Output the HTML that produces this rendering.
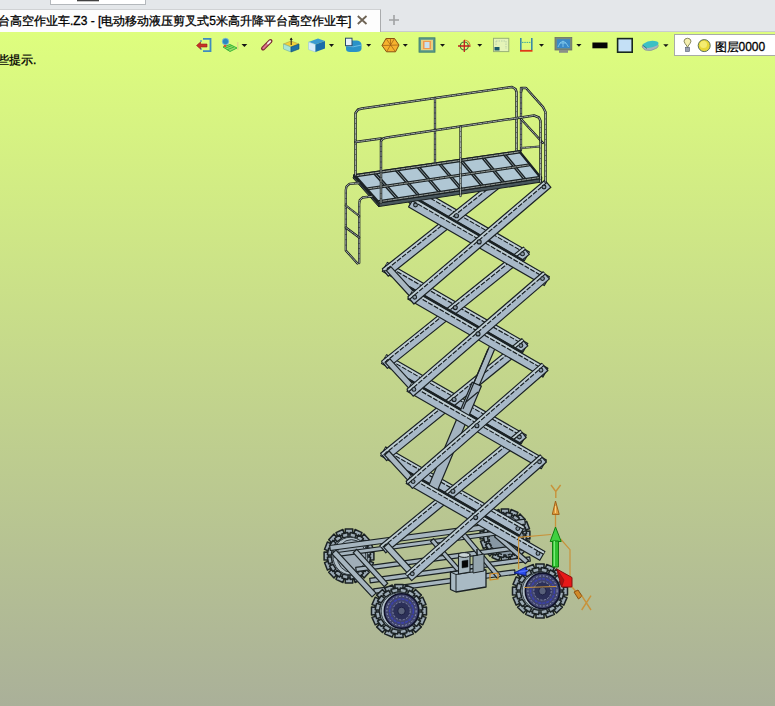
<!DOCTYPE html>
<html><head><meta charset="utf-8">
<style>
html,body{margin:0;padding:0;}
body{width:775px;height:706px;overflow:hidden;position:relative;font-family:"Liberation Sans",sans-serif;background:#e4e7ea;}
.abs{position:absolute;}
#topbar{left:0;top:0;width:775px;height:9px;background:#e4e7ea;}
#inp{left:50px;top:-2px;width:96px;height:7px;background:#fff;border:1px solid #b4b8bc;box-sizing:border-box;}
#tab{left:0;top:9px;width:381px;height:23px;background:#fdfdfd;border-right:1px solid #a9abad;border-top:1px solid #d0d2d4;box-sizing:border-box;}
#tabtxt{left:-2px;top:12px;font-size:12px;line-height:18px;color:#000;white-space:nowrap;-webkit-text-stroke:0.3px #000;}
#view{left:0;top:32px;width:775px;height:674px;background:linear-gradient(to bottom,#defe7e 0%,#aab099 100%);}
#line31{left:381px;top:31px;width:394px;height:1px;background:#c9cccf;}
#hint{left:-3px;top:52px;font-size:12px;line-height:16px;color:#000;white-space:nowrap;-webkit-text-stroke:0.3px #000;}
svg{position:absolute;left:0;top:0;}
</style></head>
<body>
<div id="topbar" class="abs"></div>
<div id="inp" class="abs"></div>
<div id="tab" class="abs"></div>
<div id="tabtxt" class="abs">台高空作业车.Z3 - [电动移动液压剪叉式5米高升降平台高空作业车]</div>
<div id="line31" class="abs"></div>
<div id="view" class="abs"></div>
<div id="hint" class="abs">些提示.</div>
<svg width="775" height="706" viewBox="0 0 775 706">
<!-- tab close and plus -->
<path d="M357.8,16 L366.5,24 M366.5,16 L357.8,24" stroke="#6e6354" stroke-width="1.8"/>
<path d="M389,20 L399,20 M394,15 L394,25" stroke="#a0a2a4" stroke-width="1.6"/>
<!-- icon1 exit -->
<path d="M203,38.8 L210.5,38.8 L210.5,51.2 L203,51.2" fill="none" stroke="#3e8cc0" stroke-width="1.8"/>
<path d="M201,40 L201,42 M201,48 L201,50" stroke="#3e8cc0" stroke-width="1.2"/>
<polygon points="196.5,45.5 200.5,42 200.5,44 207,44 207,47 200.5,47 200.5,49" fill="#c8302a" stroke="#902018" stroke-width="0.6"/>
<!-- icon2 blend -->
<path d="M223,47 L230,44.5 L237,48 L230,51.5 Z" fill="#9ad86a" stroke="#38b838" stroke-width="1"/>
<path d="M225,48.3 L232,45.5 M227,49.8 L234,47" stroke="#38b838" stroke-width="1"/>
<circle cx="225.5" cy="41.5" r="3.2" fill="#2a88c0" stroke="#7ab8e0" stroke-width="0.8"/>
<circle cx="225" cy="46" r="1.3" fill="#e05030"/>
<line x1="237.8" y1="42" x2="237.8" y2="50" stroke="#e0c090" stroke-width="0.8"/>
<polygon points="241.5,44 247.3,44 244.4,47" fill="#151515"/>
<!-- icon3 pen -->
<path d="M263,48.5 L270.5,41" stroke="#7a2a30" stroke-width="4" stroke-linecap="round"/>
<path d="M263.3,48.2 L267,44.5" stroke="#e07890" stroke-width="2" stroke-linecap="round"/>
<path d="M268,43.5 L270.2,41.3" stroke="#f6eee8" stroke-width="2" stroke-linecap="round"/>
<!-- icon4 extrude box -->
<polygon points="283.5,44 291,41 299,44 291,47" fill="#f2d23a" stroke="#b0a040" stroke-width="0.6"/>
<polygon points="283.5,44 291,47 291,52 283.5,49" fill="#a8e6d6" stroke="#70b0a0" stroke-width="0.6"/>
<polygon points="291,47 299,44 299,49 291,52" fill="#1c72a6" stroke="#104a70" stroke-width="0.6"/>
<line x1="291.2" y1="38" x2="291.2" y2="45" stroke="#202020" stroke-width="1"/>
<polygon points="289.7,40 291.2,37.5 292.7,40" fill="#202020"/>
<!-- icon5 cube -->
<polygon points="308.5,42 318,38.5 325,41 315.5,44.5" fill="#3a9ad0"/>
<polygon points="308.5,42 315.5,44.5 315.5,52 308.5,49.5" fill="#d8ecfa" stroke="#8ac0e0" stroke-width="0.5"/>
<polygon points="315.5,44.5 325,41 325,48.5 315.5,52" fill="#1a6ca8"/>
<polygon points="329,44 334,44 331.5,47" fill="#151515"/>
<!-- icon6 view box -->
<path d="M346,44 Q346,41 350,40.5 L357,40.5 Q361.5,41 361.5,45 L361.5,49 Q361,52 356,52 L350,52 Q346,52 346,49 Z" fill="#2a92c8"/>
<path d="M346,46 Q353,48 361.5,45" stroke="#7cc8ec" stroke-width="0.8" fill="none"/>
<rect x="345.5" y="38.2" width="6.5" height="7.5" fill="#e8f2fa" stroke="#2a4a6a" stroke-width="1"/>
<polygon points="366.2,44 371.2,44 368.7,46.8" fill="#151515"/>
<!-- icon7 hexagon -->
<polygon points="386,38.5 394.5,38.5 399,45 395.5,51.8 386.5,51.8 382,45.5" fill="#f6b22e" stroke="#8a5212" stroke-width="1"/>
<path d="M386,38.5 L395.5,51.8 M394.5,38.5 L386.5,51.8 M382,45.5 L399,45 M390.5,45 L390.5,38.5" stroke="#9a5a12" stroke-width="0.7"/>
<polygon points="402.8,44 407.8,44 405.3,46.8" fill="#151515"/>
<!-- icon8 frame -->
<rect x="419" y="37.8" width="16" height="14.4" fill="#5a9a8a" stroke="#3a7a70" stroke-width="0.8"/>
<rect x="421" y="39.8" width="12" height="10.4" fill="#e8d080"/>
<rect x="423" y="41" width="8" height="8" fill="#f09850"/>
<rect x="424.5" y="42" width="5" height="6" fill="#c8e0f0"/>
<polygon points="440,44 445,44 442.5,46.8" fill="#151515"/>
<!-- icon9 crosshair -->
<circle cx="464.3" cy="46" r="4" fill="none" stroke="#3a7a3a" stroke-width="1.2"/>
<path d="M464,40 A6,6 0 0 1 470,45" fill="none" stroke="#d08030" stroke-width="1.2"/>
<path d="M458,46 L470.5,46 M464.3,40 L464.3,52" stroke="#c02020" stroke-width="1.3"/>
<polygon points="477.3,44 482.2,44 479.7,46.8" fill="#151515"/>
<!-- icon10 dashed square -->
<rect x="493.5" y="38.3" width="15.3" height="13.3" fill="#e4f4b8" stroke="#98b078" stroke-width="1"/>
<path d="M496,41 L506,41 L506,49 M496,41 L496,45" fill="none" stroke="#a8c0a0" stroke-width="0.7" stroke-dasharray="1.5 1"/>
<rect x="494.5" y="47" width="5" height="3.5" fill="#1a5a6a"/>
<!-- icon11 dimension -->
<path d="M520.8,38 L520.8,50 M531.8,38 L531.8,50" stroke="#3a8aa8" stroke-width="1.6"/>
<path d="M522,42.4 L530.5,42.4" stroke="#3aa8a0" stroke-width="1" stroke-dasharray="1.5 0.8"/>
<path d="M520,50.8 L532.5,50.8" stroke="#e03818" stroke-width="1.8"/>
<polygon points="539,44 544,44 541.5,46.8" fill="#151515"/>
<!-- icon12 monitor -->
<rect x="555" y="37.5" width="16.8" height="12.5" fill="#7a8a7a" stroke="#6a7068" stroke-width="0.8"/>
<rect x="556.8" y="39.2" width="13.2" height="9" fill="#3a8ac8"/>
<path d="M558,47 L560,43 L563,41 L566,43 L568.5,47 M560,43 L566,43 M563,41 L563,47" stroke="#8ad0f0" stroke-width="0.8" fill="none"/>
<rect x="559" y="50" width="9" height="2.8" fill="#8a8f88"/>
<polygon points="576.3,44 581.5,44 578.9,46.8" fill="#151515"/>
<!-- icon13 black bar -->
<rect x="592.4" y="42.5" width="15.1" height="5.8" fill="#050505"/>
<!-- icon14 light blue square -->
<rect x="617.6" y="38.6" width="14.6" height="13.6" fill="#c4e0f6" stroke="#18281e" stroke-width="1.6"/>
<!-- icon15 layers -->
<path d="M642,46 Q648,41 656,43 Q660,45 657,48 Q651,52 645,50 Q642,48 642,46 Z" fill="#a8b4bc" stroke="#7a8a90" stroke-width="0.6"/>
<path d="M643,44 Q650,39 657,41.5 Q660,43 657,45.5 Q650,49 645,47.5 Q642.5,46 643,44 Z" fill="#3cc0c4"/>
<path d="M642.5,45 L647,48.5" stroke="#206a80" stroke-width="0.8"/>
<polygon points="663.2,44.3 668.5,44.3 665.9,47.1" fill="#151515"/>
<!-- combo -->
<rect x="674.5" y="34.5" width="105" height="21" fill="#ffffff" stroke="#a8aca8" stroke-width="1"/>
<path d="M687.5,48.5 Q687.5,46 685,43.5 Q683,41 685,39 Q687.5,37.5 690,39 Q692,41 690,43.5 Q687.5,46 687.5,48.5 Z" fill="#f6f0b0" stroke="#7a7a50" stroke-width="0.9"/>
<rect x="685.5" y="47.5" width="4" height="4" fill="#9aa0b0" stroke="#505a70" stroke-width="0.6"/>
<circle cx="704.2" cy="45.6" r="6" fill="#e8d838" stroke="#5a7058" stroke-width="1"/>
<circle cx="703.5" cy="44.5" r="3.5" fill="#f4ec70"/>
<text x="714.5" y="50.5" font-family="Liberation Sans, sans-serif" font-size="12" fill="#000" stroke="#000" stroke-width="0.3">图层0000</text>

<ellipse cx="505" cy="535" rx="22.1" ry="23" fill="#a3b2bc" stroke="#1b2224" stroke-width="1.6"/>
<polygon points="529.9,531.1 529.9,538.9 525.4,538.5 525.4,531.5" fill="#9cabb5" stroke="#1b2224" stroke-width="1.5" stroke-linejoin="round" />
<polygon points="529.5,541.3 526.6,548.6 522.5,546.4 525.1,539.9" fill="#9cabb5" stroke="#1b2224" stroke-width="1.5" stroke-linejoin="round" />
<polygon points="525.3,550.6 520,556.1 517,552.5 521.8,547.5" fill="#9cabb5" stroke="#1b2224" stroke-width="1.5" stroke-linejoin="round" />
<polygon points="518,557.5 511.1,560.5 509.7,555.9 515.9,553.2" fill="#9cabb5" stroke="#1b2224" stroke-width="1.5" stroke-linejoin="round" />
<polygon points="508.8,561 501.2,561 501.6,556.2 508.4,556.2" fill="#9cabb5" stroke="#1b2224" stroke-width="1.5" stroke-linejoin="round" />
<polygon points="498.9,560.5 492,557.5 494.1,553.2 500.3,555.9" fill="#9cabb5" stroke="#1b2224" stroke-width="1.5" stroke-linejoin="round" />
<polygon points="490,556.1 484.7,550.6 488.2,547.5 493,552.5" fill="#9cabb5" stroke="#1b2224" stroke-width="1.5" stroke-linejoin="round" />
<polygon points="483.4,548.6 480.5,541.3 484.9,539.9 487.5,546.4" fill="#9cabb5" stroke="#1b2224" stroke-width="1.5" stroke-linejoin="round" />
<polygon points="480.1,538.9 480.1,531.1 484.6,531.5 484.6,538.5" fill="#9cabb5" stroke="#1b2224" stroke-width="1.5" stroke-linejoin="round" />
<polygon points="480.5,528.7 483.4,521.4 487.5,523.6 484.9,530.1" fill="#9cabb5" stroke="#1b2224" stroke-width="1.5" stroke-linejoin="round" />
<polygon points="484.7,519.4 490,513.9 493,517.5 488.2,522.5" fill="#9cabb5" stroke="#1b2224" stroke-width="1.5" stroke-linejoin="round" />
<polygon points="492,512.5 498.9,509.5 500.3,514.1 494.1,516.8" fill="#9cabb5" stroke="#1b2224" stroke-width="1.5" stroke-linejoin="round" />
<polygon points="501.2,509 508.8,509 508.4,513.8 501.6,513.8" fill="#9cabb5" stroke="#1b2224" stroke-width="1.5" stroke-linejoin="round" />
<polygon points="511.1,509.5 518,512.5 515.9,516.8 509.7,514.1" fill="#9cabb5" stroke="#1b2224" stroke-width="1.5" stroke-linejoin="round" />
<polygon points="520,513.9 525.3,519.4 521.8,522.5 517,517.5" fill="#9cabb5" stroke="#1b2224" stroke-width="1.5" stroke-linejoin="round" />
<polygon points="526.6,521.4 529.5,528.7 525.1,530.1 522.5,523.6" fill="#9cabb5" stroke="#1b2224" stroke-width="1.5" stroke-linejoin="round" />
<polygon points="526.6,536.3 525.4,542.4 521.7,541.3 522.7,535.8" fill="#9cabb5" stroke="#1b2224" stroke-width="1.5" stroke-linejoin="round" />
<polygon points="524.5,544.8 521.1,550 518.1,547.5 521.1,542.8" fill="#9cabb5" stroke="#1b2224" stroke-width="1.5" stroke-linejoin="round" />
<polygon points="519.4,551.8 514.4,555.3 512.5,551.8 517,548.6" fill="#9cabb5" stroke="#1b2224" stroke-width="1.5" stroke-linejoin="round" />
<polygon points="512.1,556.2 506.2,557.5 505.8,553.5 511.1,552.4" fill="#9cabb5" stroke="#1b2224" stroke-width="1.5" stroke-linejoin="round" />
<polygon points="503.8,557.5 497.9,556.2 498.9,552.4 504.2,553.5" fill="#9cabb5" stroke="#1b2224" stroke-width="1.5" stroke-linejoin="round" />
<polygon points="495.6,555.3 490.6,551.8 493,548.6 497.5,551.8" fill="#9cabb5" stroke="#1b2224" stroke-width="1.5" stroke-linejoin="round" />
<polygon points="488.9,550 485.5,544.8 488.9,542.8 491.9,547.5" fill="#9cabb5" stroke="#1b2224" stroke-width="1.5" stroke-linejoin="round" />
<polygon points="484.6,542.4 483.4,536.3 487.3,535.8 488.3,541.3" fill="#9cabb5" stroke="#1b2224" stroke-width="1.5" stroke-linejoin="round" />
<polygon points="483.4,533.7 484.6,527.6 488.3,528.7 487.3,534.2" fill="#9cabb5" stroke="#1b2224" stroke-width="1.5" stroke-linejoin="round" />
<polygon points="485.5,525.2 488.9,520 491.9,522.5 488.9,527.2" fill="#9cabb5" stroke="#1b2224" stroke-width="1.5" stroke-linejoin="round" />
<polygon points="490.6,518.2 495.6,514.7 497.5,518.2 493,521.4" fill="#9cabb5" stroke="#1b2224" stroke-width="1.5" stroke-linejoin="round" />
<polygon points="497.9,513.8 503.8,512.5 504.2,516.5 498.9,517.6" fill="#9cabb5" stroke="#1b2224" stroke-width="1.5" stroke-linejoin="round" />
<polygon points="506.2,512.5 512.1,513.8 511.1,517.6 505.8,516.5" fill="#9cabb5" stroke="#1b2224" stroke-width="1.5" stroke-linejoin="round" />
<polygon points="514.4,514.7 519.4,518.2 517,521.4 512.5,518.2" fill="#9cabb5" stroke="#1b2224" stroke-width="1.5" stroke-linejoin="round" />
<polygon points="521.1,520 524.5,525.2 521.1,527.2 518.1,522.5" fill="#9cabb5" stroke="#1b2224" stroke-width="1.5" stroke-linejoin="round" />
<polygon points="525.4,527.6 526.6,533.7 522.7,534.2 521.7,528.7" fill="#9cabb5" stroke="#1b2224" stroke-width="1.5" stroke-linejoin="round" />
<ellipse cx="506.2" cy="535" rx="17.3" ry="18" fill="#b0bec6" stroke="#303a40" stroke-width="1"/>
<ellipse cx="507.5" cy="535" rx="14.4" ry="15.8" fill="#a0aeb8" stroke="#303a40" stroke-width="1"/>
<ellipse cx="506" cy="537" rx="17" ry="18" fill="#8898a4" stroke="#1b2224" stroke-width="1.5" stroke-dasharray="3 1.5"/>
<ellipse cx="349" cy="556" rx="22.1" ry="23.9" fill="#a3b2bc" stroke="#1b2224" stroke-width="1.6"/>
<polygon points="373.9,551.9 373.9,560.1 369.4,559.7 369.4,552.3" fill="#9cabb5" stroke="#1b2224" stroke-width="1.5" stroke-linejoin="round" />
<polygon points="373.5,562.6 370.6,570.1 366.5,567.8 369.1,561" fill="#9cabb5" stroke="#1b2224" stroke-width="1.5" stroke-linejoin="round" />
<polygon points="369.3,572.2 364,578 361,574.2 365.8,569" fill="#9cabb5" stroke="#1b2224" stroke-width="1.5" stroke-linejoin="round" />
<polygon points="362,579.4 355.1,582.5 353.7,577.8 359.9,575" fill="#9cabb5" stroke="#1b2224" stroke-width="1.5" stroke-linejoin="round" />
<polygon points="352.8,583 345.2,583 345.6,578.1 352.4,578.1" fill="#9cabb5" stroke="#1b2224" stroke-width="1.5" stroke-linejoin="round" />
<polygon points="342.9,582.5 336,579.4 338.1,575 344.3,577.8" fill="#9cabb5" stroke="#1b2224" stroke-width="1.5" stroke-linejoin="round" />
<polygon points="334,578 328.7,572.2 332.2,569 337,574.2" fill="#9cabb5" stroke="#1b2224" stroke-width="1.5" stroke-linejoin="round" />
<polygon points="327.4,570.1 324.5,562.6 328.9,561 331.5,567.8" fill="#9cabb5" stroke="#1b2224" stroke-width="1.5" stroke-linejoin="round" />
<polygon points="324.1,560.1 324.1,551.9 328.6,552.3 328.6,559.7" fill="#9cabb5" stroke="#1b2224" stroke-width="1.5" stroke-linejoin="round" />
<polygon points="324.5,549.4 327.4,541.9 331.5,544.2 328.9,551" fill="#9cabb5" stroke="#1b2224" stroke-width="1.5" stroke-linejoin="round" />
<polygon points="328.7,539.8 334,534 337,537.8 332.2,543" fill="#9cabb5" stroke="#1b2224" stroke-width="1.5" stroke-linejoin="round" />
<polygon points="336,532.6 342.9,529.5 344.3,534.2 338.1,537" fill="#9cabb5" stroke="#1b2224" stroke-width="1.5" stroke-linejoin="round" />
<polygon points="345.2,529 352.8,529 352.4,533.9 345.6,533.9" fill="#9cabb5" stroke="#1b2224" stroke-width="1.5" stroke-linejoin="round" />
<polygon points="355.1,529.5 362,532.6 359.9,537 353.7,534.2" fill="#9cabb5" stroke="#1b2224" stroke-width="1.5" stroke-linejoin="round" />
<polygon points="364,534 369.3,539.8 365.8,543 361,537.8" fill="#9cabb5" stroke="#1b2224" stroke-width="1.5" stroke-linejoin="round" />
<polygon points="370.6,541.9 373.5,549.4 369.1,551 366.5,544.2" fill="#9cabb5" stroke="#1b2224" stroke-width="1.5" stroke-linejoin="round" />
<polygon points="370.6,557.3 369.4,563.7 365.7,562.6 366.7,556.8" fill="#9cabb5" stroke="#1b2224" stroke-width="1.5" stroke-linejoin="round" />
<polygon points="368.5,566.2 365.1,571.6 362.1,569 365.1,564.1" fill="#9cabb5" stroke="#1b2224" stroke-width="1.5" stroke-linejoin="round" />
<polygon points="363.4,573.5 358.4,577.1 356.5,573.4 361,570.2" fill="#9cabb5" stroke="#1b2224" stroke-width="1.5" stroke-linejoin="round" />
<polygon points="356.1,578.1 350.2,579.4 349.8,575.2 355.1,574.1" fill="#9cabb5" stroke="#1b2224" stroke-width="1.5" stroke-linejoin="round" />
<polygon points="347.8,579.4 341.9,578.1 342.9,574.1 348.2,575.2" fill="#9cabb5" stroke="#1b2224" stroke-width="1.5" stroke-linejoin="round" />
<polygon points="339.6,577.1 334.6,573.5 337,570.2 341.5,573.4" fill="#9cabb5" stroke="#1b2224" stroke-width="1.5" stroke-linejoin="round" />
<polygon points="332.9,571.6 329.5,566.2 332.9,564.1 335.9,569" fill="#9cabb5" stroke="#1b2224" stroke-width="1.5" stroke-linejoin="round" />
<polygon points="328.6,563.7 327.4,557.3 331.3,556.8 332.3,562.6" fill="#9cabb5" stroke="#1b2224" stroke-width="1.5" stroke-linejoin="round" />
<polygon points="327.4,554.7 328.6,548.3 332.3,549.4 331.3,555.2" fill="#9cabb5" stroke="#1b2224" stroke-width="1.5" stroke-linejoin="round" />
<polygon points="329.5,545.8 332.9,540.4 335.9,543 332.9,547.9" fill="#9cabb5" stroke="#1b2224" stroke-width="1.5" stroke-linejoin="round" />
<polygon points="334.6,538.5 339.6,534.9 341.5,538.6 337,541.8" fill="#9cabb5" stroke="#1b2224" stroke-width="1.5" stroke-linejoin="round" />
<polygon points="341.9,533.9 347.8,532.6 348.2,536.8 342.9,537.9" fill="#9cabb5" stroke="#1b2224" stroke-width="1.5" stroke-linejoin="round" />
<polygon points="350.2,532.6 356.1,533.9 355.1,537.9 349.8,536.8" fill="#9cabb5" stroke="#1b2224" stroke-width="1.5" stroke-linejoin="round" />
<polygon points="358.4,534.9 363.4,538.5 361,541.8 356.5,538.6" fill="#9cabb5" stroke="#1b2224" stroke-width="1.5" stroke-linejoin="round" />
<polygon points="365.1,540.4 368.5,545.8 365.1,547.9 362.1,543" fill="#9cabb5" stroke="#1b2224" stroke-width="1.5" stroke-linejoin="round" />
<polygon points="369.4,548.3 370.6,554.7 366.7,555.2 365.7,549.4" fill="#9cabb5" stroke="#1b2224" stroke-width="1.5" stroke-linejoin="round" />
<ellipse cx="350.2" cy="556" rx="17.3" ry="18.7" fill="#b0bec6" stroke="#303a40" stroke-width="1"/>
<ellipse cx="351.5" cy="556" rx="14.4" ry="16.4" fill="#a0aeb8" stroke="#303a40" stroke-width="1"/>
<polygon points="330.3,550.5 525.3,524.2 524.7,519.2 329.7,545.5" fill="#a6b5bf" stroke="#1b2224" stroke-width="1.2" stroke-linejoin="round" />
<polygon points="334.3,556.9 525.3,531.2 524.7,527.2 333.7,553" fill="#a6b5bf" stroke="#1b2224" stroke-width="1.2" stroke-linejoin="round" />
<polygon points="356.3,571.7 530.3,548.2 529.7,543.8 355.7,567.3" fill="#a6b5bf" stroke="#1b2224" stroke-width="1.2" stroke-linejoin="round" />
<polygon points="370.3,582.8 530.3,561.2 529.7,556.8 369.7,578.4" fill="#a6b5bf" stroke="#1b2224" stroke-width="1.2" stroke-linejoin="round" />
<polygon points="374.3,593.3 515.3,574.3 514.7,569.8 373.7,588.8" fill="#a6b5bf" stroke="#1b2224" stroke-width="1.2" stroke-linejoin="round" />
<polygon points="332,553.9 372,596.9 376,593.1 336,550.1" fill="#a6b5bf" stroke="#1b2224" stroke-width="1.2" stroke-linejoin="round" />
<polygon points="353.2,552.7 384.2,586.7 387.8,583.3 356.8,549.3" fill="#a6b5bf" stroke="#1b2224" stroke-width="1.2" stroke-linejoin="round" />
<polygon points="430.5,541.3 460.5,575.3 463.5,572.7 433.5,538.7" fill="#a6b5bf" stroke="#1b2224" stroke-width="1.2" stroke-linejoin="round" />
<polygon points="461.3,535.4 497.3,578.4 500.7,575.6 464.7,532.6" fill="#a6b5bf" stroke="#1b2224" stroke-width="1.2" stroke-linejoin="round" />
<polygon points="494.5,536.7 525.5,563.7 528.5,560.3 497.5,533.3" fill="#a6b5bf" stroke="#1b2224" stroke-width="1.2" stroke-linejoin="round" />
<polygon points="478.9,521.6 518.9,549.6 521.1,546.4 481.1,518.4" fill="#a6b5bf" stroke="#1b2224" stroke-width="1.2" stroke-linejoin="round" />
<polygon points="387.5,181.6 524.3,260.8 529.4,252 392.6,172.8" fill="#a8b9c8" stroke="#1b2224" stroke-width="1.2" stroke-linejoin="round" />
<line x1="391.1" y1="175.4" x2="527.9" y2="254.6" stroke="#1b2224" stroke-width="1.3" stroke-dasharray="5 1.5"/>
<line x1="391.8" y1="174.2" x2="528.6" y2="253.4" stroke="#c2d0d2" stroke-width="1.3" />
<polygon points="382.3,271.3 522.7,352.4 527.8,343.5 387.4,262.5" fill="#a8b9c8" stroke="#1b2224" stroke-width="1.2" stroke-linejoin="round" />
<line x1="385.9" y1="265.1" x2="526.3" y2="346.1" stroke="#1b2224" stroke-width="1.3" stroke-dasharray="5 1.5"/>
<line x1="386.6" y1="263.9" x2="527" y2="344.9" stroke="#c2d0d2" stroke-width="1.3" />
<polygon points="381.5,363.5 521.1,443.9 526.2,435.1 386.6,354.7" fill="#a8b9c8" stroke="#1b2224" stroke-width="1.2" stroke-linejoin="round" />
<line x1="385.1" y1="357.3" x2="524.7" y2="437.7" stroke="#1b2224" stroke-width="1.3" stroke-dasharray="5 1.5"/>
<line x1="385.8" y1="356.1" x2="525.4" y2="436.5" stroke="#c2d0d2" stroke-width="1.3" />
<polygon points="380.7,455.7 519.6,535.5 524.7,526.6 385.8,446.9" fill="#a8b9c8" stroke="#1b2224" stroke-width="1.2" stroke-linejoin="round" />
<line x1="384.3" y1="449.5" x2="523.2" y2="529.2" stroke="#1b2224" stroke-width="1.3" stroke-dasharray="5 1.5"/>
<line x1="385" y1="448.3" x2="523.9" y2="528" stroke="#c2d0d2" stroke-width="1.3" />
<polygon points="521.1,158.6 382.4,268.8 388.2,276.2 527,166" fill="#a8b9c8" stroke="#1b2224" stroke-width="1.2" stroke-linejoin="round" />
<line x1="523" y1="161" x2="384.3" y2="271.2" stroke="#1b2224" stroke-width="1.3" stroke-dasharray="5 1.5"/>
<line x1="522.1" y1="159.9" x2="383.4" y2="270.1" stroke="#c2d0d2" stroke-width="1.3" />
<polygon points="523.4,247.1 381.6,361.1 387.4,368.4 529.3,254.4" fill="#a8b9c8" stroke="#1b2224" stroke-width="1.2" stroke-linejoin="round" />
<line x1="525.3" y1="249.4" x2="383.4" y2="363.4" stroke="#1b2224" stroke-width="1.3" stroke-dasharray="5 1.5"/>
<line x1="524.4" y1="248.3" x2="382.6" y2="362.3" stroke="#c2d0d2" stroke-width="1.3" />
<polygon points="521.8,338.7 380.7,453.3 386.6,460.6 527.8,345.9" fill="#a8b9c8" stroke="#1b2224" stroke-width="1.2" stroke-linejoin="round" />
<line x1="523.7" y1="341" x2="382.6" y2="455.6" stroke="#1b2224" stroke-width="1.3" stroke-dasharray="5 1.5"/>
<line x1="522.8" y1="339.9" x2="381.7" y2="454.5" stroke="#c2d0d2" stroke-width="1.3" />
<polygon points="520.2,430.2 379.9,545.5 385.8,552.8 526.2,437.5" fill="#a8b9c8" stroke="#1b2224" stroke-width="1.2" stroke-linejoin="round" />
<line x1="522.1" y1="432.5" x2="381.8" y2="547.8" stroke="#1b2224" stroke-width="1.3" stroke-dasharray="5 1.5"/>
<line x1="521.2" y1="431.4" x2="380.9" y2="546.7" stroke="#c2d0d2" stroke-width="1.3" />
<circle cx="456.5" cy="215.7" r="2" fill="#8a9aa6" stroke="#1b2224" stroke-width="1.1"/>
<circle cx="455.3" cy="307.6" r="2" fill="#8a9aa6" stroke="#1b2224" stroke-width="1.1"/>
<circle cx="454.1" cy="399.5" r="2" fill="#8a9aa6" stroke="#1b2224" stroke-width="1.1"/>
<circle cx="452.9" cy="491.3" r="2" fill="#8a9aa6" stroke="#1b2224" stroke-width="1.1"/>
<circle cx="390.1" cy="177.2" r="1.9" fill="#8a9aa6" stroke="#1b2224" stroke-width="1.1"/>
<circle cx="524" cy="162.3" r="1.9" fill="#8a9aa6" stroke="#1b2224" stroke-width="1.1"/>
<circle cx="389.2" cy="269.4" r="1.9" fill="#8a9aa6" stroke="#1b2224" stroke-width="1.1"/>
<circle cx="522.5" cy="253.9" r="1.9" fill="#8a9aa6" stroke="#1b2224" stroke-width="1.1"/>
<circle cx="388.4" cy="361.6" r="1.9" fill="#8a9aa6" stroke="#1b2224" stroke-width="1.1"/>
<circle cx="520.9" cy="345.5" r="1.9" fill="#8a9aa6" stroke="#1b2224" stroke-width="1.1"/>
<circle cx="387.6" cy="453.8" r="1.9" fill="#8a9aa6" stroke="#1b2224" stroke-width="1.1"/>
<circle cx="519.4" cy="437" r="1.9" fill="#8a9aa6" stroke="#1b2224" stroke-width="1.1"/>
<circle cx="386.7" cy="546" r="1.9" fill="#8a9aa6" stroke="#1b2224" stroke-width="1.1"/>
<circle cx="517.8" cy="528.6" r="1.9" fill="#8a9aa6" stroke="#1b2224" stroke-width="1.1"/>
<line x1="409.7" y1="195.1" x2="523.8" y2="261.2" stroke="#1b2224" stroke-width="3" />
<line x1="408.9" y1="287.3" x2="522.3" y2="352.8" stroke="#1b2224" stroke-width="3" />
<line x1="408.1" y1="379.5" x2="520.8" y2="444.4" stroke="#1b2224" stroke-width="3" />
<line x1="407.3" y1="471.7" x2="519.2" y2="536" stroke="#1b2224" stroke-width="3" />
<polygon points="387.2,178.5 414,207.8 418.4,203.7 391.6,174.5" fill="#a9b8c2" stroke="#1b2224" stroke-width="1.2" stroke-linejoin="round" />
<polygon points="386.3,270.7 413.2,300 417.6,295.9 390.8,266.7" fill="#a9b8c2" stroke="#1b2224" stroke-width="1.2" stroke-linejoin="round" />
<polygon points="385.5,362.9 412.4,392.2 416.8,388.1 389.9,358.8" fill="#a9b8c2" stroke="#1b2224" stroke-width="1.2" stroke-linejoin="round" />
<polygon points="384.7,455.1 411.6,484.4 416,480.3 389.1,451" fill="#a9b8c2" stroke="#1b2224" stroke-width="1.2" stroke-linejoin="round" />
<polygon points="383.8,547.3 410.8,576.6 415.2,572.5 388.3,543.2" fill="#a9b8c2" stroke="#1b2224" stroke-width="1.2" stroke-linejoin="round" />
<polygon points="476,393 495.5,347.3 490,345 470.5,390.7" fill="#a9b8c2" stroke="#1b2224" stroke-width="1.2" stroke-linejoin="round" />
<polygon points="437.8,489.8 481.4,386.1 472.2,382.2 428.6,485.9" fill="#a3b3c0" stroke="#1b2224" stroke-width="1.2" stroke-linejoin="round" />
<line x1="488" y1="349" x2="463" y2="409" stroke="#1b2224" stroke-width="1.2" />
<line x1="466" y1="402" x2="478" y2="392" stroke="#1b2224" stroke-width="1.2" />
<polygon points="408.6,206.9 544.3,285.5 549.4,276.7 413.7,198.1" fill="#a8b9c8" stroke="#1b2224" stroke-width="1.2" stroke-linejoin="round" />
<line x1="412.2" y1="200.7" x2="547.9" y2="279.3" stroke="#1b2224" stroke-width="1.3" stroke-dasharray="5 1.5"/>
<line x1="412.9" y1="199.5" x2="548.6" y2="278.1" stroke="#c2d0d2" stroke-width="1.3" />
<polygon points="407.8,299.1 542.8,377.1 547.9,368.3 412.9,290.3" fill="#a8b9c8" stroke="#1b2224" stroke-width="1.2" stroke-linejoin="round" />
<line x1="411.4" y1="292.9" x2="546.4" y2="370.9" stroke="#1b2224" stroke-width="1.3" stroke-dasharray="5 1.5"/>
<line x1="412.1" y1="291.7" x2="547.1" y2="369.7" stroke="#c2d0d2" stroke-width="1.3" />
<polygon points="407,391.3 541.3,468.7 546.4,459.9 412.1,382.5" fill="#a8b9c8" stroke="#1b2224" stroke-width="1.2" stroke-linejoin="round" />
<line x1="410.6" y1="385.1" x2="544.9" y2="462.5" stroke="#1b2224" stroke-width="1.3" stroke-dasharray="5 1.5"/>
<line x1="411.3" y1="383.9" x2="545.6" y2="461.3" stroke="#c2d0d2" stroke-width="1.3" />
<polygon points="406.2,483.5 539.8,560.3 544.9,551.5 411.3,474.7" fill="#a8b9c8" stroke="#1b2224" stroke-width="1.2" stroke-linejoin="round" />
<line x1="409.8" y1="477.3" x2="543.4" y2="554.1" stroke="#1b2224" stroke-width="1.3" stroke-dasharray="5 1.5"/>
<line x1="410.5" y1="476.1" x2="544.1" y2="552.9" stroke="#c2d0d2" stroke-width="1.3" />
<polygon points="544.8,180.2 407.8,296.9 413.9,304 550.9,187.3" fill="#a8b9c8" stroke="#1b2224" stroke-width="1.2" stroke-linejoin="round" />
<line x1="546.7" y1="182.5" x2="409.8" y2="299.1" stroke="#1b2224" stroke-width="1.3" stroke-dasharray="5 1.5"/>
<line x1="545.8" y1="181.4" x2="408.9" y2="298.1" stroke="#c2d0d2" stroke-width="1.3" />
<polygon points="543.2,271.8 407,389.1 413.2,396.2 549.4,278.9" fill="#a8b9c8" stroke="#1b2224" stroke-width="1.2" stroke-linejoin="round" />
<line x1="545.2" y1="274" x2="409" y2="391.4" stroke="#1b2224" stroke-width="1.3" stroke-dasharray="5 1.5"/>
<line x1="544.3" y1="273" x2="408.1" y2="390.3" stroke="#c2d0d2" stroke-width="1.3" />
<polygon points="541.7,363.4 406.2,481.3 412.4,488.4 547.9,370.5" fill="#a8b9c8" stroke="#1b2224" stroke-width="1.2" stroke-linejoin="round" />
<line x1="543.7" y1="365.6" x2="408.2" y2="483.6" stroke="#1b2224" stroke-width="1.3" stroke-dasharray="5 1.5"/>
<line x1="542.7" y1="364.6" x2="407.3" y2="482.5" stroke="#c2d0d2" stroke-width="1.3" />
<polygon points="540.1,455 405.4,573.6 411.7,580.6 546.4,462" fill="#a8b9c8" stroke="#1b2224" stroke-width="1.2" stroke-linejoin="round" />
<line x1="542.1" y1="457.2" x2="407.4" y2="575.8" stroke="#1b2224" stroke-width="1.3" stroke-dasharray="5 1.5"/>
<line x1="541.2" y1="456.2" x2="406.5" y2="574.8" stroke="#c2d0d2" stroke-width="1.3" />
<circle cx="479.2" cy="241.9" r="2" fill="#8a9aa6" stroke="#1b2224" stroke-width="1.1"/>
<circle cx="478" cy="333.9" r="2" fill="#8a9aa6" stroke="#1b2224" stroke-width="1.1"/>
<circle cx="476.9" cy="425.8" r="2" fill="#8a9aa6" stroke="#1b2224" stroke-width="1.1"/>
<circle cx="475.7" cy="517.6" r="2" fill="#8a9aa6" stroke="#1b2224" stroke-width="1.1"/>
<circle cx="415.5" cy="205" r="1.9" fill="#8a9aa6" stroke="#1b2224" stroke-width="1.1"/>
<circle cx="544" cy="187" r="1.9" fill="#8a9aa6" stroke="#1b2224" stroke-width="1.1"/>
<circle cx="414.7" cy="297.2" r="1.9" fill="#8a9aa6" stroke="#1b2224" stroke-width="1.1"/>
<circle cx="542.5" cy="278.6" r="1.9" fill="#8a9aa6" stroke="#1b2224" stroke-width="1.1"/>
<circle cx="413.9" cy="389.4" r="1.9" fill="#8a9aa6" stroke="#1b2224" stroke-width="1.1"/>
<circle cx="541" cy="370.2" r="1.9" fill="#8a9aa6" stroke="#1b2224" stroke-width="1.1"/>
<circle cx="413.1" cy="481.6" r="1.9" fill="#8a9aa6" stroke="#1b2224" stroke-width="1.1"/>
<circle cx="539.5" cy="461.8" r="1.9" fill="#8a9aa6" stroke="#1b2224" stroke-width="1.1"/>
<circle cx="412.3" cy="573.8" r="1.9" fill="#8a9aa6" stroke="#1b2224" stroke-width="1.1"/>
<circle cx="538" cy="553.4" r="1.9" fill="#8a9aa6" stroke="#1b2224" stroke-width="1.1"/>
<polygon points="354,175 519,151 541.5,178.5 379,203" fill="#b0c7d4" stroke="#1b2224" stroke-width="1.4" stroke-linejoin="round" />
<polygon points="354,175 379,203 379,207 353,178" fill="#3a4548" stroke="#1b2224" stroke-width="1" stroke-linejoin="round" />
<polygon points="379,203 541.5,178.5 541.5,182 379,206.5" fill="#4a585e" stroke="#1b2224" stroke-width="1.2" stroke-linejoin="round" />
<line x1="374.5" y1="173" x2="397.8" y2="199.2" stroke="#1b2224" stroke-width="3.4" />
<line x1="374.5" y1="173" x2="397.8" y2="199.2" stroke="#8a9aa2" stroke-width="0.9" />
<line x1="396.1" y1="169.8" x2="419.1" y2="196" stroke="#1b2224" stroke-width="3.4" />
<line x1="396.1" y1="169.8" x2="419.1" y2="196" stroke="#8a9aa2" stroke-width="0.9" />
<line x1="417.8" y1="166.7" x2="440.4" y2="192.8" stroke="#1b2224" stroke-width="3.4" />
<line x1="417.8" y1="166.7" x2="440.4" y2="192.8" stroke="#8a9aa2" stroke-width="0.9" />
<line x1="439.4" y1="163.5" x2="461.7" y2="189.6" stroke="#1b2224" stroke-width="3.4" />
<line x1="439.4" y1="163.5" x2="461.7" y2="189.6" stroke="#8a9aa2" stroke-width="0.9" />
<line x1="461" y1="160.4" x2="482.9" y2="186.4" stroke="#1b2224" stroke-width="3.4" />
<line x1="461" y1="160.4" x2="482.9" y2="186.4" stroke="#8a9aa2" stroke-width="0.9" />
<line x1="482.6" y1="157.2" x2="504.2" y2="183.2" stroke="#1b2224" stroke-width="3.4" />
<line x1="482.6" y1="157.2" x2="504.2" y2="183.2" stroke="#8a9aa2" stroke-width="0.9" />
<line x1="504.2" y1="154.1" x2="525.5" y2="180" stroke="#1b2224" stroke-width="3.4" />
<line x1="504.2" y1="154.1" x2="525.5" y2="180" stroke="#8a9aa2" stroke-width="0.9" />
<path d="M368.1,188.8 L528.6,165" fill="none" stroke="#1b2224" stroke-width="3" stroke-linejoin="round" stroke-linecap="round"/>
<path d="M368.1,188.8 L528.6,165" fill="none" stroke="#c4ccc4" stroke-width="0.8" stroke-linejoin="round" stroke-linecap="round" stroke-dasharray="4 1.2" opacity="0.9"/>
<path d="M354.8,175.8 L519.7,151.8" fill="none" stroke="#1b2224" stroke-width="3.6" stroke-linejoin="round" stroke-linecap="round"/>
<path d="M354.8,175.8 L519.7,151.8" fill="none" stroke="#c4ccc4" stroke-width="0.9" stroke-linejoin="round" stroke-linecap="round" stroke-dasharray="4 1.2" opacity="0.9"/>
<path d="M378,201.9 L540.6,177.4" fill="none" stroke="#1b2224" stroke-width="3.4" stroke-linejoin="round" stroke-linecap="round"/>
<path d="M378,201.9 L540.6,177.4" fill="none" stroke="#c4ccc4" stroke-width="0.8" stroke-linejoin="round" stroke-linecap="round" stroke-dasharray="4 1.2" opacity="0.9"/>
<line x1="354.5" y1="175.6" x2="378.5" y2="202.4" stroke="#1b2224" stroke-width="3" />
<line x1="519.5" y1="151.6" x2="541" y2="177.9" stroke="#1b2224" stroke-width="2.4" />
<path d="M355.5,175 L355.5,113 L358,109.5 L362,108.5 L512,87 L515.5,89 L516.5,92 L516.5,150" fill="none" stroke="#1b2224" stroke-width="2.5" stroke-linejoin="round" stroke-linecap="round"/>
<path d="M355.5,175 L355.5,113 L358,109.5 L362,108.5 L512,87 L515.5,89 L516.5,92 L516.5,150" fill="none" stroke="#c4ccc4" stroke-width="0.9" stroke-linejoin="round" stroke-linecap="round" stroke-dasharray="4 1.2" opacity="0.9"/>
<path d="M355.5,142 L381,138.5" fill="none" stroke="#1b2224" stroke-width="2.5" stroke-linejoin="round" stroke-linecap="round"/>
<path d="M355.5,142 L381,138.5" fill="none" stroke="#c4ccc4" stroke-width="0.9" stroke-linejoin="round" stroke-linecap="round" stroke-dasharray="4 1.2" opacity="0.9"/>
<path d="M435,98 L435,162" fill="none" stroke="#1b2224" stroke-width="2.3" stroke-linejoin="round" stroke-linecap="round"/>
<path d="M435,98 L435,162" fill="none" stroke="#c4ccc4" stroke-width="0.9" stroke-linejoin="round" stroke-linecap="round" stroke-dasharray="4 1.2" opacity="0.9"/>
<path d="M521,92 L522,88 L526,88 L543,107 L545.5,112 L545.5,182" fill="none" stroke="#1b2224" stroke-width="2.5" stroke-linejoin="round" stroke-linecap="round"/>
<path d="M521,92 L522,88 L526,88 L543,107 L545.5,112 L545.5,182" fill="none" stroke="#c4ccc4" stroke-width="0.9" stroke-linejoin="round" stroke-linecap="round" stroke-dasharray="4 1.2" opacity="0.9"/>
<path d="M521,88 L521,150" fill="none" stroke="#1b2224" stroke-width="2.3" stroke-linejoin="round" stroke-linecap="round"/>
<path d="M521,88 L521,150" fill="none" stroke="#c4ccc4" stroke-width="0.9" stroke-linejoin="round" stroke-linecap="round" stroke-dasharray="4 1.2" opacity="0.9"/>
<path d="M521,119 L543,143" fill="none" stroke="#1b2224" stroke-width="2.3" stroke-linejoin="round" stroke-linecap="round"/>
<path d="M521,119 L543,143" fill="none" stroke="#c4ccc4" stroke-width="0.9" stroke-linejoin="round" stroke-linecap="round" stroke-dasharray="4 1.2" opacity="0.9"/>
<path d="M521,148 L540,146.5" fill="none" stroke="#1b2224" stroke-width="2.2" stroke-linejoin="round" stroke-linecap="round"/>
<path d="M521,148 L540,146.5" fill="none" stroke="#c4ccc4" stroke-width="0.8" stroke-linejoin="round" stroke-linecap="round" stroke-dasharray="4 1.2" opacity="0.9"/>
<path d="M381,203 L381,141 L383,138.5 L387,137.5 L534,115.5 L539,117.5 L540.5,121 L540.5,182" fill="none" stroke="#1b2224" stroke-width="2.5" stroke-linejoin="round" stroke-linecap="round"/>
<path d="M381,203 L381,141 L383,138.5 L387,137.5 L534,115.5 L539,117.5 L540.5,121 L540.5,182" fill="none" stroke="#c4ccc4" stroke-width="0.9" stroke-linejoin="round" stroke-linecap="round" stroke-dasharray="4 1.2" opacity="0.9"/>
<path d="M460.5,127 L460.5,196" fill="none" stroke="#1b2224" stroke-width="2.3" stroke-linejoin="round" stroke-linecap="round"/>
<path d="M460.5,127 L460.5,196" fill="none" stroke="#c4ccc4" stroke-width="0.9" stroke-linejoin="round" stroke-linecap="round" stroke-dasharray="4 1.2" opacity="0.9"/>
<path d="M359,183 L349.5,183.8 L346.5,186.5 L345.8,190 L345.8,250.5 L357.5,263.5" fill="none" stroke="#1b2224" stroke-width="2.3" stroke-linejoin="round" stroke-linecap="round"/>
<path d="M359,183 L349.5,183.8 L346.5,186.5 L345.8,190 L345.8,250.5 L357.5,263.5" fill="none" stroke="#c4ccc4" stroke-width="0.9" stroke-linejoin="round" stroke-linecap="round" stroke-dasharray="4 1.2" opacity="0.9"/>
<path d="M372,196.3 L362.5,197.5 L359.8,200 L359.2,204 L359.2,263" fill="none" stroke="#1b2224" stroke-width="2.3" stroke-linejoin="round" stroke-linecap="round"/>
<path d="M372,196.3 L362.5,197.5 L359.8,200 L359.2,204 L359.2,263" fill="none" stroke="#c4ccc4" stroke-width="0.9" stroke-linejoin="round" stroke-linecap="round" stroke-dasharray="4 1.2" opacity="0.9"/>
<path d="M345.8,205.5 L359.2,216" fill="none" stroke="#1b2224" stroke-width="2.2" stroke-linejoin="round" stroke-linecap="round"/>
<path d="M345.8,205.5 L359.2,216" fill="none" stroke="#c4ccc4" stroke-width="0.8" stroke-linejoin="round" stroke-linecap="round" stroke-dasharray="4 1.2" opacity="0.9"/>
<path d="M345.8,227.5 L359.2,237.5" fill="none" stroke="#1b2224" stroke-width="2.2" stroke-linejoin="round" stroke-linecap="round"/>
<path d="M345.8,227.5 L359.2,237.5" fill="none" stroke="#c4ccc4" stroke-width="0.8" stroke-linejoin="round" stroke-linecap="round" stroke-dasharray="4 1.2" opacity="0.9"/>
<polygon points="450.5,572 480,567.5 486,570 486,587 456,592 450.5,589.5" fill="#a9bac4" stroke="#1b2224" stroke-width="1.3" stroke-linejoin="round" />
<line x1="450.5" y1="572" x2="456" y2="574.5" stroke="#1b2224" stroke-width="1" />
<line x1="456" y1="574.5" x2="486" y2="570" stroke="#1b2224" stroke-width="1" />
<line x1="456" y1="574.5" x2="456" y2="592" stroke="#1b2224" stroke-width="1" />
<polygon points="458.5,556 470,554 470,572 458.5,574" fill="#a7b7bf" stroke="#1b2224" stroke-width="1.1" stroke-linejoin="round" />
<ellipse cx="464.2" cy="555" rx="5.8" ry="2.4" fill="#c9d4d6" stroke="#1b2224" stroke-width="1"/>
<polygon points="462,561 468,560 468,567 462,568" fill="#050505" stroke="#1b2224" stroke-width="0.5" stroke-linejoin="round" />
<polygon points="473,556 484,554 484,571 473,573" fill="#95a5ae" stroke="#1b2224" stroke-width="1" stroke-linejoin="round" />
<line x1="477" y1="549" x2="477" y2="556" stroke="#1b2224" stroke-width="1.5" />
<polygon points="490,574 498,573 498,579 490,580" fill="none" stroke="#d08a20" stroke-width="1.2" stroke-linejoin="round" />
<ellipse cx="399" cy="611" rx="24.4" ry="23.5" fill="#a3b2bc" stroke="#1b2224" stroke-width="1.6"/>
<polygon points="426.5,607 426.5,615 421.5,614.6 421.5,607.4" fill="#9cabb5" stroke="#1b2224" stroke-width="1.5" stroke-linejoin="round" />
<polygon points="426,617.4 422.8,624.8 418.3,622.6 421.2,616" fill="#9cabb5" stroke="#1b2224" stroke-width="1.5" stroke-linejoin="round" />
<polygon points="421.4,626.9 415.5,632.5 412.2,628.8 417.5,623.7" fill="#9cabb5" stroke="#1b2224" stroke-width="1.5" stroke-linejoin="round" />
<polygon points="413.4,633.9 405.7,637 404.1,632.4 411.1,629.6" fill="#9cabb5" stroke="#1b2224" stroke-width="1.5" stroke-linejoin="round" />
<polygon points="403.2,637.5 394.8,637.5 395.3,632.6 402.7,632.6" fill="#9cabb5" stroke="#1b2224" stroke-width="1.5" stroke-linejoin="round" />
<polygon points="392.3,637 384.6,633.9 386.9,629.6 393.9,632.4" fill="#9cabb5" stroke="#1b2224" stroke-width="1.5" stroke-linejoin="round" />
<polygon points="382.5,632.5 376.6,626.9 380.5,623.7 385.8,628.8" fill="#9cabb5" stroke="#1b2224" stroke-width="1.5" stroke-linejoin="round" />
<polygon points="375.2,624.8 372,617.4 376.8,616 379.7,622.6" fill="#9cabb5" stroke="#1b2224" stroke-width="1.5" stroke-linejoin="round" />
<polygon points="371.5,615 371.5,607 376.5,607.4 376.5,614.6" fill="#9cabb5" stroke="#1b2224" stroke-width="1.5" stroke-linejoin="round" />
<polygon points="372,604.6 375.2,597.2 379.7,599.4 376.8,606" fill="#9cabb5" stroke="#1b2224" stroke-width="1.5" stroke-linejoin="round" />
<polygon points="376.6,595.1 382.5,589.5 385.8,593.2 380.5,598.3" fill="#9cabb5" stroke="#1b2224" stroke-width="1.5" stroke-linejoin="round" />
<polygon points="384.6,588.1 392.3,585 393.9,589.6 386.9,592.4" fill="#9cabb5" stroke="#1b2224" stroke-width="1.5" stroke-linejoin="round" />
<polygon points="394.8,584.5 403.2,584.5 402.7,589.4 395.3,589.4" fill="#9cabb5" stroke="#1b2224" stroke-width="1.5" stroke-linejoin="round" />
<polygon points="405.7,585 413.4,588.1 411.1,592.4 404.1,589.6" fill="#9cabb5" stroke="#1b2224" stroke-width="1.5" stroke-linejoin="round" />
<polygon points="415.5,589.5 421.4,595.1 417.5,598.3 412.2,593.2" fill="#9cabb5" stroke="#1b2224" stroke-width="1.5" stroke-linejoin="round" />
<polygon points="422.8,597.2 426,604.6 421.2,606 418.3,599.4" fill="#9cabb5" stroke="#1b2224" stroke-width="1.5" stroke-linejoin="round" />
<polygon points="422.8,612.3 421.5,618.6 417.4,617.5 418.6,611.8" fill="#9cabb5" stroke="#1b2224" stroke-width="1.5" stroke-linejoin="round" />
<polygon points="420.5,621 416.8,626.3 413.4,623.8 416.8,619" fill="#9cabb5" stroke="#1b2224" stroke-width="1.5" stroke-linejoin="round" />
<polygon points="414.9,628.1 409.4,631.7 407.3,628.1 412.3,624.9" fill="#9cabb5" stroke="#1b2224" stroke-width="1.5" stroke-linejoin="round" />
<polygon points="406.9,632.7 400.3,633.9 399.8,629.9 405.7,628.7" fill="#9cabb5" stroke="#1b2224" stroke-width="1.5" stroke-linejoin="round" />
<polygon points="397.7,633.9 391.1,632.7 392.3,628.7 398.2,629.9" fill="#9cabb5" stroke="#1b2224" stroke-width="1.5" stroke-linejoin="round" />
<polygon points="388.6,631.7 383.1,628.1 385.7,624.9 390.7,628.1" fill="#9cabb5" stroke="#1b2224" stroke-width="1.5" stroke-linejoin="round" />
<polygon points="381.2,626.3 377.5,621 381.2,619 384.6,623.8" fill="#9cabb5" stroke="#1b2224" stroke-width="1.5" stroke-linejoin="round" />
<polygon points="376.5,618.6 375.2,612.3 379.4,611.8 380.6,617.5" fill="#9cabb5" stroke="#1b2224" stroke-width="1.5" stroke-linejoin="round" />
<polygon points="375.2,609.7 376.5,603.4 380.6,604.5 379.4,610.2" fill="#9cabb5" stroke="#1b2224" stroke-width="1.5" stroke-linejoin="round" />
<polygon points="377.5,601 381.2,595.7 384.6,598.2 381.2,603" fill="#9cabb5" stroke="#1b2224" stroke-width="1.5" stroke-linejoin="round" />
<polygon points="383.1,593.9 388.6,590.3 390.7,593.9 385.7,597.1" fill="#9cabb5" stroke="#1b2224" stroke-width="1.5" stroke-linejoin="round" />
<polygon points="391.1,589.3 397.7,588.1 398.2,592.1 392.3,593.3" fill="#9cabb5" stroke="#1b2224" stroke-width="1.5" stroke-linejoin="round" />
<polygon points="400.3,588.1 406.9,589.3 405.7,593.3 399.8,592.1" fill="#9cabb5" stroke="#1b2224" stroke-width="1.5" stroke-linejoin="round" />
<polygon points="409.4,590.3 414.9,593.9 412.3,597.1 407.3,593.9" fill="#9cabb5" stroke="#1b2224" stroke-width="1.5" stroke-linejoin="round" />
<polygon points="416.8,595.7 420.5,601 416.8,603 413.4,598.2" fill="#9cabb5" stroke="#1b2224" stroke-width="1.5" stroke-linejoin="round" />
<polygon points="421.5,603.4 422.8,609.7 418.6,610.2 417.4,604.5" fill="#9cabb5" stroke="#1b2224" stroke-width="1.5" stroke-linejoin="round" />
<ellipse cx="400.2" cy="611" rx="19.1" ry="18.4" fill="#b0bec6" stroke="#303a40" stroke-width="1"/>
<ellipse cx="401.5" cy="611" rx="17.2" ry="17.3" fill="#40446e" stroke="#10122a" stroke-width="1.5"/>
<ellipse cx="401.5" cy="611" rx="14.6" ry="14.8" fill="none" stroke="#a8b0c4" stroke-width="0.9" stroke-dasharray="1.5 2"/>
<ellipse cx="401.5" cy="611" rx="11.9" ry="12" fill="none" stroke="#3a40b0" stroke-width="1.5" stroke-dasharray="3 1"/>
<ellipse cx="401.5" cy="611" rx="8.7" ry="8.9" fill="#2c3058" stroke="#9098b0" stroke-width="0.8" stroke-dasharray="2 1.5"/>
<ellipse cx="401.5" cy="611" rx="3.7" ry="3.8" fill="#58607a" stroke="#14163a" stroke-width="0.8"/>
<ellipse cx="540" cy="591" rx="24.4" ry="23.9" fill="#a3b2bc" stroke="#1b2224" stroke-width="1.6"/>
<polygon points="567.5,586.9 567.5,595.1 562.5,594.7 562.5,587.3" fill="#9cabb5" stroke="#1b2224" stroke-width="1.5" stroke-linejoin="round" />
<polygon points="567,597.6 563.8,605.1 559.3,602.8 562.2,596" fill="#9cabb5" stroke="#1b2224" stroke-width="1.5" stroke-linejoin="round" />
<polygon points="562.4,607.2 556.5,613 553.2,609.2 558.5,604" fill="#9cabb5" stroke="#1b2224" stroke-width="1.5" stroke-linejoin="round" />
<polygon points="554.4,614.4 546.7,617.5 545.1,612.8 552.1,610" fill="#9cabb5" stroke="#1b2224" stroke-width="1.5" stroke-linejoin="round" />
<polygon points="544.2,618 535.8,618 536.3,613.1 543.7,613.1" fill="#9cabb5" stroke="#1b2224" stroke-width="1.5" stroke-linejoin="round" />
<polygon points="533.3,617.5 525.6,614.4 527.9,610 534.9,612.8" fill="#9cabb5" stroke="#1b2224" stroke-width="1.5" stroke-linejoin="round" />
<polygon points="523.5,613 517.6,607.2 521.5,604 526.8,609.2" fill="#9cabb5" stroke="#1b2224" stroke-width="1.5" stroke-linejoin="round" />
<polygon points="516.2,605.1 513,597.6 517.8,596 520.7,602.8" fill="#9cabb5" stroke="#1b2224" stroke-width="1.5" stroke-linejoin="round" />
<polygon points="512.5,595.1 512.5,586.9 517.5,587.3 517.5,594.7" fill="#9cabb5" stroke="#1b2224" stroke-width="1.5" stroke-linejoin="round" />
<polygon points="513,584.4 516.2,576.9 520.7,579.2 517.8,586" fill="#9cabb5" stroke="#1b2224" stroke-width="1.5" stroke-linejoin="round" />
<polygon points="517.6,574.8 523.5,569 526.8,572.8 521.5,578" fill="#9cabb5" stroke="#1b2224" stroke-width="1.5" stroke-linejoin="round" />
<polygon points="525.6,567.6 533.3,564.5 534.9,569.2 527.9,572" fill="#9cabb5" stroke="#1b2224" stroke-width="1.5" stroke-linejoin="round" />
<polygon points="535.8,564 544.2,564 543.7,568.9 536.3,568.9" fill="#9cabb5" stroke="#1b2224" stroke-width="1.5" stroke-linejoin="round" />
<polygon points="546.7,564.5 554.4,567.6 552.1,572 545.1,569.2" fill="#9cabb5" stroke="#1b2224" stroke-width="1.5" stroke-linejoin="round" />
<polygon points="556.5,569 562.4,574.8 558.5,578 553.2,572.8" fill="#9cabb5" stroke="#1b2224" stroke-width="1.5" stroke-linejoin="round" />
<polygon points="563.8,576.9 567,584.4 562.2,586 559.3,579.2" fill="#9cabb5" stroke="#1b2224" stroke-width="1.5" stroke-linejoin="round" />
<polygon points="563.8,592.3 562.5,598.7 558.4,597.6 559.6,591.8" fill="#9cabb5" stroke="#1b2224" stroke-width="1.5" stroke-linejoin="round" />
<polygon points="561.5,601.2 557.8,606.6 554.4,604 557.8,599.1" fill="#9cabb5" stroke="#1b2224" stroke-width="1.5" stroke-linejoin="round" />
<polygon points="555.9,608.5 550.4,612.1 548.3,608.4 553.3,605.2" fill="#9cabb5" stroke="#1b2224" stroke-width="1.5" stroke-linejoin="round" />
<polygon points="547.9,613.1 541.3,614.4 540.8,610.2 546.7,609.1" fill="#9cabb5" stroke="#1b2224" stroke-width="1.5" stroke-linejoin="round" />
<polygon points="538.7,614.4 532.1,613.1 533.3,609.1 539.2,610.2" fill="#9cabb5" stroke="#1b2224" stroke-width="1.5" stroke-linejoin="round" />
<polygon points="529.6,612.1 524.1,608.5 526.7,605.2 531.7,608.4" fill="#9cabb5" stroke="#1b2224" stroke-width="1.5" stroke-linejoin="round" />
<polygon points="522.2,606.6 518.5,601.2 522.2,599.1 525.6,604" fill="#9cabb5" stroke="#1b2224" stroke-width="1.5" stroke-linejoin="round" />
<polygon points="517.5,598.7 516.2,592.3 520.4,591.8 521.6,597.6" fill="#9cabb5" stroke="#1b2224" stroke-width="1.5" stroke-linejoin="round" />
<polygon points="516.2,589.7 517.5,583.3 521.6,584.4 520.4,590.2" fill="#9cabb5" stroke="#1b2224" stroke-width="1.5" stroke-linejoin="round" />
<polygon points="518.5,580.8 522.2,575.4 525.6,578 522.2,582.9" fill="#9cabb5" stroke="#1b2224" stroke-width="1.5" stroke-linejoin="round" />
<polygon points="524.1,573.5 529.6,569.9 531.7,573.6 526.7,576.8" fill="#9cabb5" stroke="#1b2224" stroke-width="1.5" stroke-linejoin="round" />
<polygon points="532.1,568.9 538.7,567.6 539.2,571.8 533.3,572.9" fill="#9cabb5" stroke="#1b2224" stroke-width="1.5" stroke-linejoin="round" />
<polygon points="541.3,567.6 547.9,568.9 546.7,572.9 540.8,571.8" fill="#9cabb5" stroke="#1b2224" stroke-width="1.5" stroke-linejoin="round" />
<polygon points="550.4,569.9 555.9,573.5 553.3,576.8 548.3,573.6" fill="#9cabb5" stroke="#1b2224" stroke-width="1.5" stroke-linejoin="round" />
<polygon points="557.8,575.4 561.5,580.8 557.8,582.9 554.4,578" fill="#9cabb5" stroke="#1b2224" stroke-width="1.5" stroke-linejoin="round" />
<polygon points="562.5,583.3 563.8,589.7 559.6,590.2 558.4,584.4" fill="#9cabb5" stroke="#1b2224" stroke-width="1.5" stroke-linejoin="round" />
<ellipse cx="541.2" cy="591" rx="19.1" ry="18.7" fill="#b0bec6" stroke="#303a40" stroke-width="1"/>
<ellipse cx="542.5" cy="591" rx="17.2" ry="17.7" fill="#40446e" stroke="#10122a" stroke-width="1.5"/>
<ellipse cx="542.5" cy="591" rx="14.6" ry="15.1" fill="none" stroke="#a8b0c4" stroke-width="0.9" stroke-dasharray="1.5 2"/>
<ellipse cx="542.5" cy="591" rx="11.9" ry="12.2" fill="none" stroke="#3a40b0" stroke-width="1.5" stroke-dasharray="3 1"/>
<ellipse cx="542.5" cy="591" rx="8.7" ry="9.1" fill="#2c3058" stroke="#9098b0" stroke-width="0.8" stroke-dasharray="2 1.5"/>
<ellipse cx="542.5" cy="591" rx="3.7" ry="3.9" fill="#58607a" stroke="#14163a" stroke-width="0.8"/>
<path d="M518.6,569 L518.6,537.3 L551,534.5 M560.6,539 L570,549.7 L570,580" fill="none" stroke="#c8923a" stroke-width="1.2" />
<line x1="555.5" y1="514" x2="555.5" y2="528" stroke="#c8923a" stroke-width="1.3" />
<polygon points="552.3,514.4 555.5,501 559.2,514.4" fill="#e0a040" stroke="#a06018" stroke-width="1" stroke-linejoin="round" />
<line x1="555.5" y1="506" x2="555.5" y2="513" stroke="#ffd080" stroke-width="1" />
<polygon points="550.2,541.5 555.5,527 561.2,541.5" fill="#40d040" stroke="#108010" stroke-width="1" stroke-linejoin="round" />
<polygon points="552.5,541 558.5,541 558.5,567 552.5,567" fill="#30c030" stroke="#108010" stroke-width="1" stroke-linejoin="round" />
<line x1="554.3" y1="541" x2="554.3" y2="566" stroke="#80f080" stroke-width="1.2" />
<polygon points="556.8,569 572,577.5 572,587 561.6,587" fill="#e81818" stroke="#801010" stroke-width="1" stroke-linejoin="round" />
<polygon points="556.8,569 564,580 561.6,587" fill="#b01010" stroke="#801010" stroke-width="0.6" stroke-linejoin="round" />
<line x1="572" y1="587" x2="578.8" y2="594.7" stroke="#c8923a" stroke-width="1.3" />
<line x1="524" y1="587.5" x2="556" y2="586.5" stroke="#c8923a" stroke-width="1" />
<polygon points="574,592 578,590 582,596 578.5,599" fill="#d08a2a" stroke="#8a5010" stroke-width="1" stroke-linejoin="round" />
<polygon points="514,573 526,567 526,575.5" fill="#2848e8" stroke="#102080" stroke-width="1" stroke-linejoin="round" />
<line x1="519" y1="572" x2="528" y2="570.5" stroke="#5070ff" stroke-width="1.5" />
<path d="M551,485 L555.8,491.5 L560.6,485 M555.8,491.5 L555.8,498" fill="none" stroke="#c8923a" stroke-width="1.4" />
<path d="M581.7,595.6 L591,610 M591,595.6 L581.7,610" fill="none" stroke="#c8923a" stroke-width="1.4" />
<rect x="77" y="0" width="22" height="1.3" fill="#111" opacity="0.8"/>
</svg>
</body></html>
